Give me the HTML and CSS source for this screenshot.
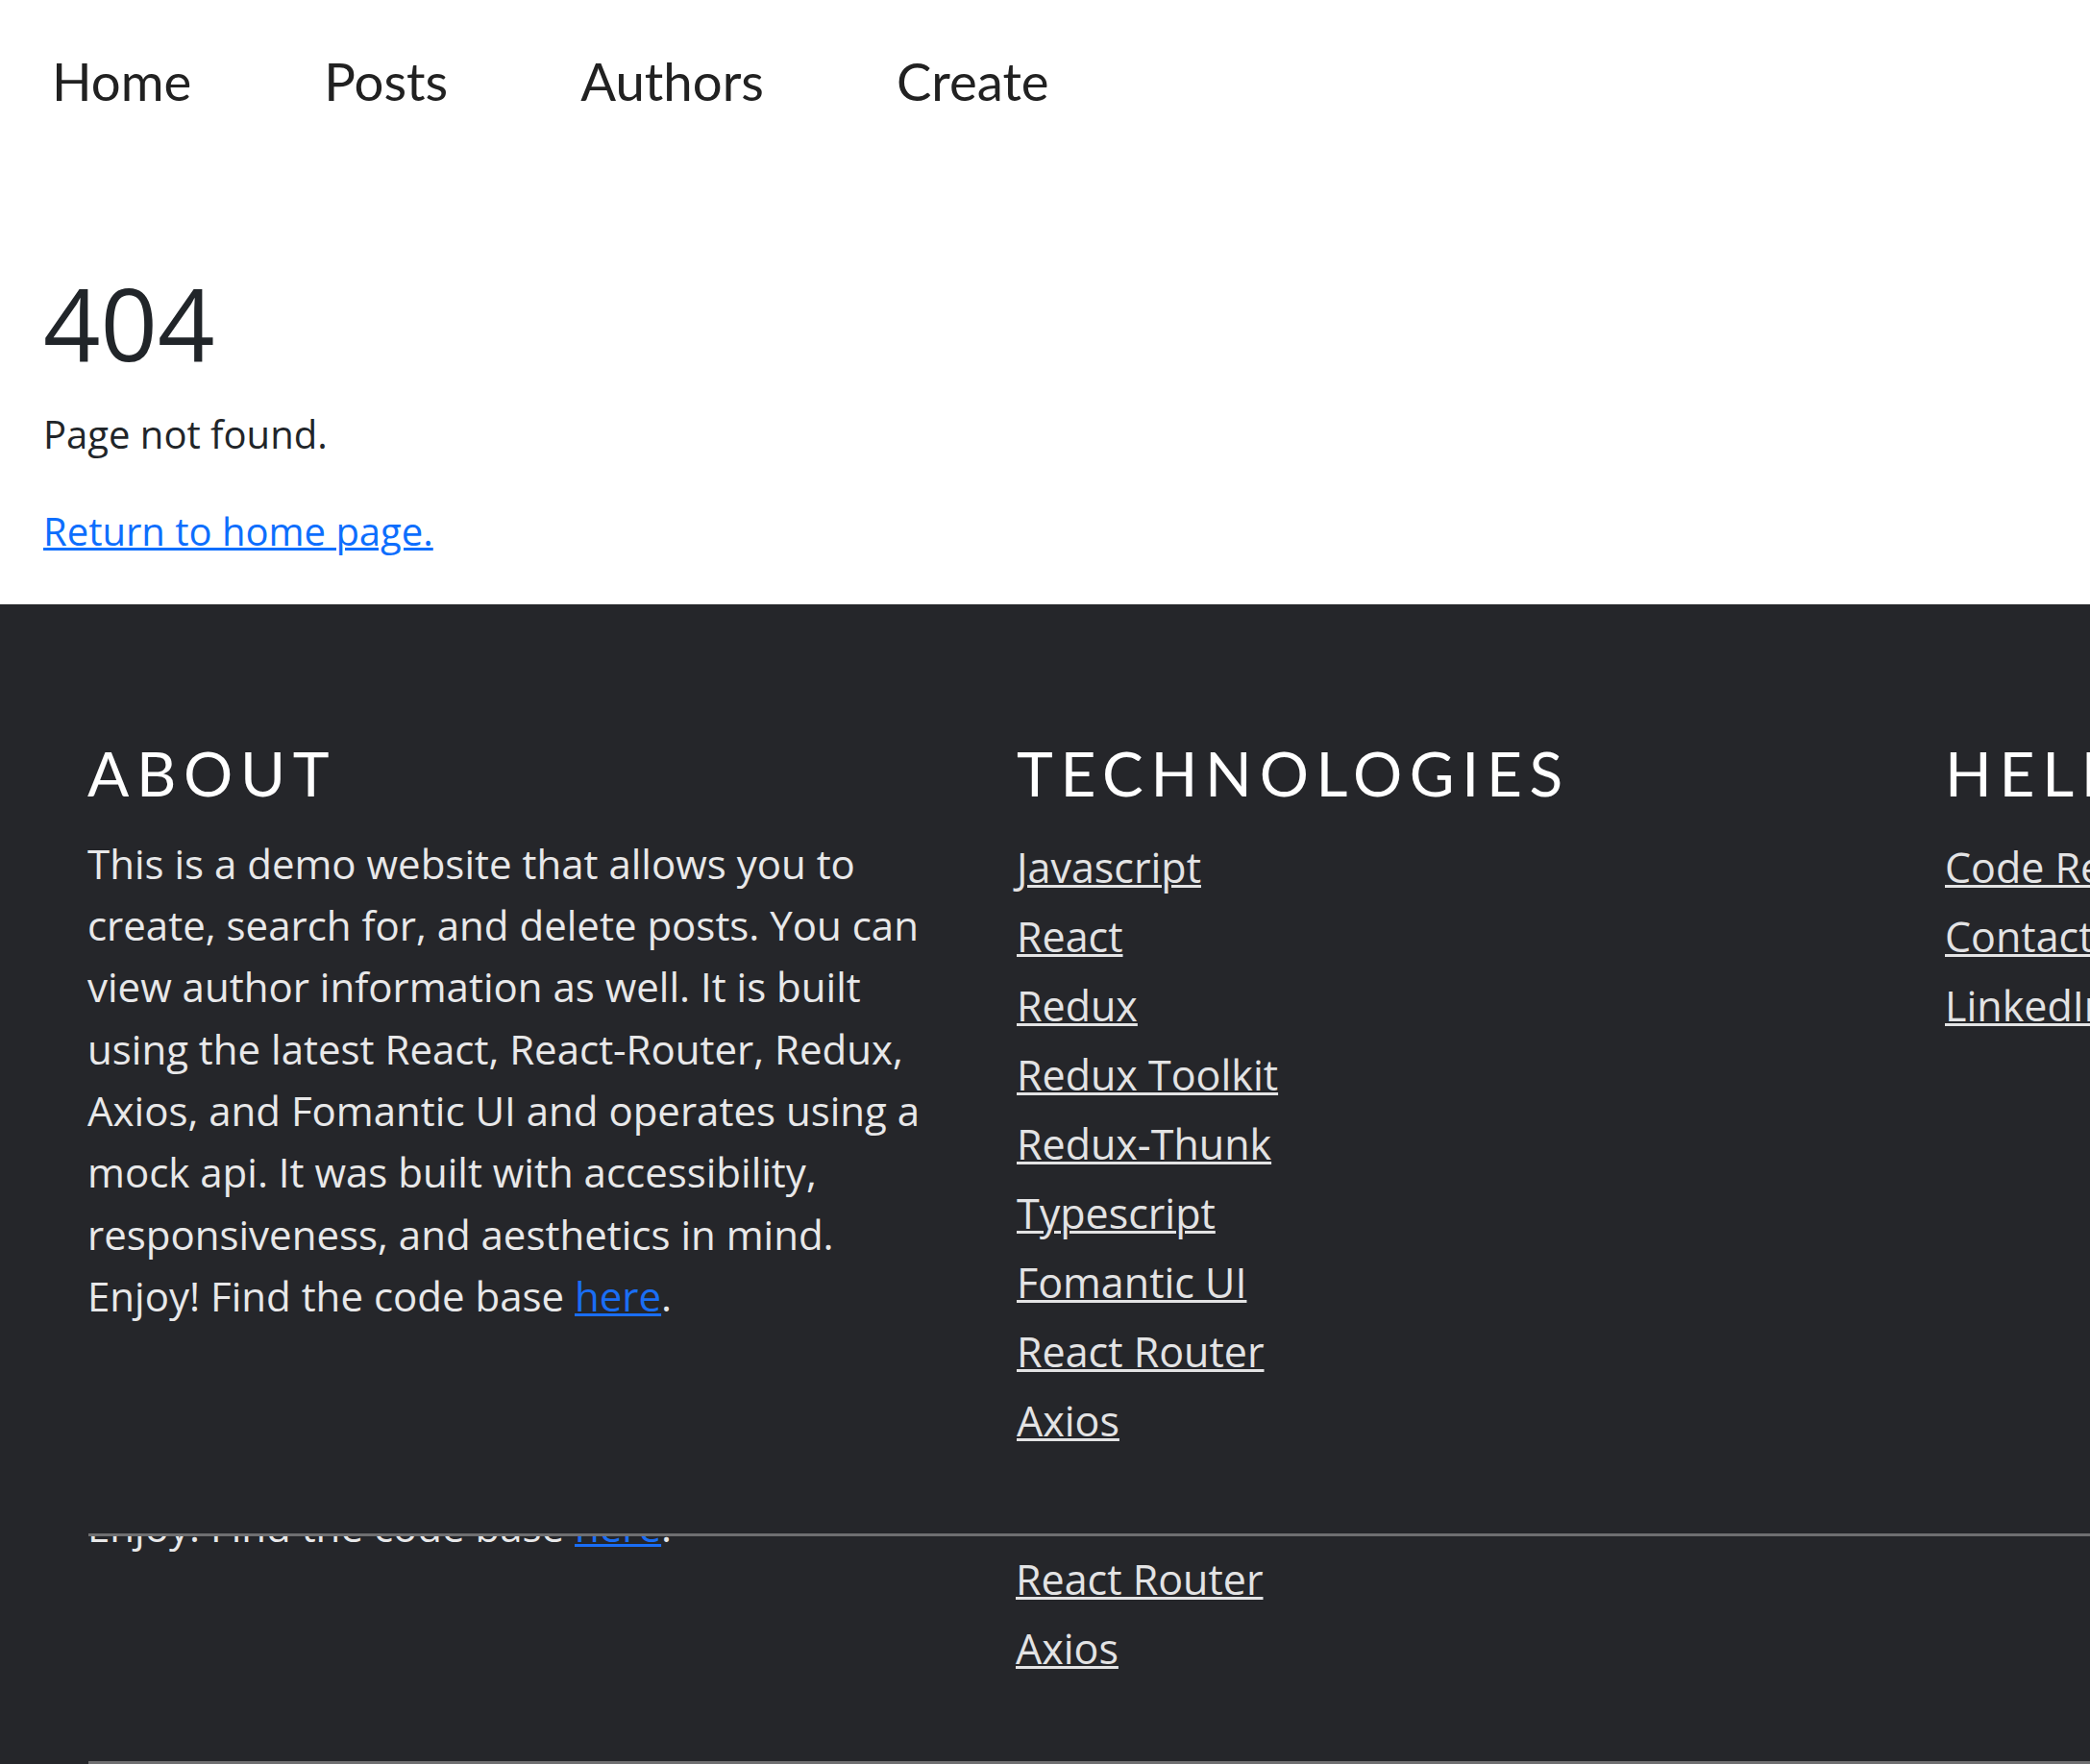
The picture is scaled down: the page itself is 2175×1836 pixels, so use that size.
FILE: index.html
```html
<!DOCTYPE html>
<html lang="en">
<head>
<meta charset="utf-8">
<title>404 - Page not found</title>
<link rel="stylesheet" href="styles.css">
</head>
<body>
<header class="top-nav">
  <a class="nav-item" href="#">Home</a>
  <a class="nav-item" href="#">Posts</a>
  <a class="nav-item" href="#">Authors</a>
  <a class="nav-item" href="#">Create</a>
</header>

<main class="not-found">
  <h1 class="nf-code">404</h1>
  <p class="nf-msg">Page not found.</p>
  <a class="nf-link" href="#">Return to home page.</a>
</main>

<footer class="site-footer">
  <div class="footer-grid">
    <section class="footer-col">
      <h2 class="footer-title">About</h2>
      <p class="about-text">This is a demo website that allows you to create, search for, and delete posts. You can view author information as well. It is built using the latest React, React-Router, Redux, Axios, and Fomantic UI and operates using a mock api. It was built with accessibility, responsiveness, and aesthetics in mind. Enjoy! Find the code base <a class="code-link" href="#">here</a>.</p>
    </section>
    <section class="footer-col">
      <h2 class="footer-title">Technologies</h2>
      <ul class="link-list">
        <li><a href="#">Javascript</a></li>
        <li><a href="#">React</a></li>
        <li><a href="#">Redux</a></li>
        <li><a href="#">Redux Toolkit</a></li>
        <li><a href="#">Redux-Thunk</a></li>
        <li><a href="#">Typescript</a></li>
        <li><a href="#">Fomantic UI</a></li>
        <li><a href="#">React Router</a></li>
        <li><a href="#">Axios</a></li>
      </ul>
    </section>
    <section class="footer-col">
      <h2 class="footer-title">Helpful Links</h2>
      <ul class="link-list">
        <li><a href="#">Code Repository</a></li>
        <li><a href="#">Contact</a></li>
        <li><a href="#">LinkedIn</a></li>
      </ul>
    </section>
  </div>

  <div class="footer-echo">
    <div class="echo-grid">
      <div class="echo-col">
        <p class="about-text echo-line">Enjoy! Find the code base <a class="code-link" href="#">here</a>.</p>
      </div>
      <div class="echo-col">
        <ul class="link-list echo-list">
          <li><a href="#">React Router</a></li>
          <li><a href="#">Axios</a></li>
        </ul>
      </div>
    </div>
  </div>
</footer>
</body>
</html>
```

FILE: styles.css
```css
html, body {
  margin: 0;
  padding: 0;
  background: #ffffff;
  overflow-x: hidden;
}

body {
  font-family: "Open Sans", "Noto Sans", sans-serif;
  color: #212529;
}

/* ---------- top navigation ---------- */
.top-nav {
  display: flex;
  align-items: baseline;
  gap: 138px;
  padding: 52px 0 0 54px;
}

.nav-item {
  font-family: Lato, "Open Sans", sans-serif;
  font-size: 54.5px;
  line-height: 65px;
  color: #212121;
  text-decoration: none;
}

/* ---------- 404 block ---------- */
.not-found {
  padding: 0 0 0 45px;
}

.nf-code {
  margin: 157px 0 0;
  font-size: 104px;
  font-weight: 400;
  line-height: 1.2;
  color: #212529;
}

.nf-msg {
  margin: 23px 0 0;
  font-size: 40px;
  line-height: 1.5;
  color: #212529;
}

.nf-link {
  display: inline-block;
  margin-top: 41px;
  font-size: 40px;
  line-height: 1.5;
  color: #0d6efd;
  text-decoration: underline;
  text-decoration-thickness: 3px;
}

/* ---------- footer ---------- */
.site-footer {
  margin-top: 46px;
  background: #25262a;
  color: #e8e8e9;
  overflow: hidden;
}

.footer-grid {
  display: grid;
  grid-template-columns: 967px 966px 966px;
  padding: 137px 0 0 91px;
  height: 830px;
  box-sizing: content-box;
}

.footer-col {
  min-width: 0;
}

.footer-title {
  margin: 0;
  font-family: Lato, "Open Sans", sans-serif;
  font-size: 64px;
  font-weight: 400;
  line-height: 77px;
  letter-spacing: 0.12em;
  text-transform: uppercase;
  color: #ffffff;
  white-space: nowrap;
}

.about-text {
  margin: 24px 0 0;
  width: 880px;
  font-size: 42px;
  line-height: 64.3px;
  color: #e8e8e9;
}

.code-link {
  color: #1a6ef5;
  text-decoration: underline;
  text-decoration-thickness: 3px;
}

.link-list {
  list-style: none;
  margin: 24px 0 0;
  padding: 0;
}

.link-list li {
  font-size: 43px;
  line-height: 72px;
  white-space: nowrap;
}

.link-list a {
  color: #e3e3e4;
  text-decoration: underline;
  text-decoration-thickness: 3px;
}

/* repeated, clipped strip at the bottom of the capture */
.footer-echo {
  margin-left: 92px;
  height: 234px;
  border-top: 3px solid #6f6f71;
  border-bottom: 3px solid #6f6f71;
  overflow: hidden;
}

.echo-grid {
  display: grid;
  grid-template-columns: 966px 966px;
  margin-left: -1px;
}

.echo-line {
  margin-top: -42px;
}

.echo-list {
  margin-top: 9px;
}
```
